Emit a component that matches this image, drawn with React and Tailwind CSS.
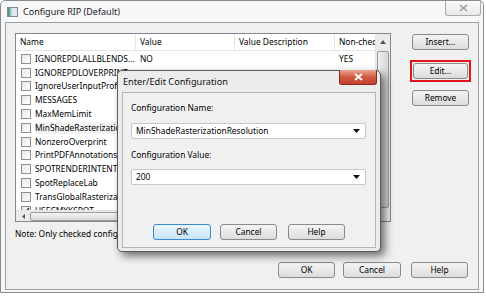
import React from "react";

const rows = [
  { name: "IGNOREPDLALLBLENDS...", value: "NO", desc: "", non: "YES" },
  { name: "IGNOREPDLOVERPRINT" },
  { name: "IgnoreUserInputProfile" },
  { name: "MESSAGES" },
  { name: "MaxMemLimit" },
  { name: "MinShadeRasterizationResolution", selected: true },
  { name: "NonzeroOverprint" },
  { name: "PrintPDFAnnotations" },
  { name: "SPOTRENDERINTENT" },
  { name: "SpotReplaceLab" },
  { name: "TransGlobalRasterization" },
  { name: "USECMYKSPOT", checked: true },
];

function Btn({ children, className = "", primary = false }) {
  return (
    <div
      className={
        "flex items-center justify-center h-[16px] rounded-[3px] border text-[8.4px] leading-none text-black " +
        (primary
          ? "border-[#3c8ad2] bg-gradient-to-b from-[#eaf6fd] to-[#c8e4f6] "
          : "border-[#8a8a8a] bg-gradient-to-b from-[#f5f5f5] to-[#dcdcdc] ") +
        className
      }
    >
      {children}
    </div>
  );
}

function Check({ checked }) {
  return (
    <div className="w-[10px] h-[10px] border border-[#8e8f8f] bg-gradient-to-br from-[#e6e6e6] to-white flex items-center justify-center shrink-0">
      {checked && (
        <svg width="8" height="8" viewBox="0 0 8 8">
          <path d="M1 4 L3 6 L7 1" stroke="#333" strokeWidth="1.4" fill="none" />
        </svg>
      )}
    </div>
  );
}

function Combo({ text }) {
  return (
    <div className="flex items-center h-[16px] bg-white border border-[#c7c7c7] rounded-[2px] pl-[4px] pr-[5px]">
      <span className="flex-1">{text}</span>
      <svg width="7" height="4" viewBox="0 0 7 4">
        <path d="M0 0 H7 L3.5 4 Z" fill="#111" />
      </svg>
    </div>
  );
}

export default function App() {
  return (
    <div className="relative w-[486px] h-[298px] bg-white overflow-hidden font-['Noto_Sans',sans-serif] text-[8.4px] leading-[12px] text-black">
      {/* outer window */}
      <div className="w-[484px] h-[293px] bg-[#f6f7f9] border border-[#8b8b8b] rounded-t-[5px] flex flex-col">
        <div className="h-[21px] flex items-center pl-[6px] relative">
          <div className="w-[11px] h-[10px] border border-[#7a8a9a] bg-gradient-to-r from-[#3a8f6a] via-[#dfe9f2] to-[#dfe9f2] mr-[5px]" />
          <span className="text-[9px] text-[#222]">Configure RIP (Default)</span>
          <div className="absolute right-[2px] top-[0px] w-[36px] h-[15px] border border-[#a9a9a9] border-t-0 rounded-b-[3px] bg-gradient-to-b from-[#fafafa] to-[#e9e9e9] flex items-center justify-center">
            <svg width="9" height="8" viewBox="0 0 9 8">
              <path d="M1 1 L8 7 M8 1 L1 7" stroke="#9a9a9a" strokeWidth="1.6" />
            </svg>
          </div>
        </div>
        <div className="mx-[4px] mb-[2px] flex-1 border border-[#a0a0a0] bg-[#f0f0f0] flex flex-col px-[9px] pt-[10px]">
          <div className="flex">
            {/* list view */}
            <div className="w-[376px] h-[189px] border border-[#828790] bg-white flex flex-col">
              <div className="flex flex-1 min-h-0">
                <div className="flex-1 flex flex-col min-w-0 overflow-hidden">
                  <div className="flex h-[17px] items-center border-b border-[#e5e5e5] shrink-0">
                    <div className="w-[120px] pl-[4px] border-r border-[#e5e5e5] h-full flex items-center">Name</div>
                    <div className="w-[99px] pl-[4px] border-r border-[#e5e5e5] h-full flex items-center">Value</div>
                    <div className="w-[100px] pl-[4px] border-r border-[#e5e5e5] h-full flex items-center">Value Description</div>
                    <div className="flex-1 pl-[4px] h-full flex items-center whitespace-nowrap overflow-hidden">Non-checked</div>
                  </div>
                  <div className="pt-[1px] overflow-hidden flex-1">
                    {rows.map((r) => (
                      <div key={r.name} className="flex items-center h-[13.8px]">
                        <div className="w-[120px] flex items-center pl-[5px] gap-[4px] overflow-hidden">
                          <Check checked={r.checked} />
                          <span className={"whitespace-nowrap overflow-hidden pr-[1px] " + (r.selected ? "bg-[#f2f2f2]" : "")}>{r.name}</span>
                        </div>
                        <div className="w-[99px] pl-[4px]">{r.value}</div>
                        <div className="w-[100px] pl-[4px]">{r.desc}</div>
                        <div className="flex-1 pl-[4px]">{r.non}</div>
                      </div>
                    ))}
                  </div>
                </div>
                {/* vertical scrollbar */}
                <div className="w-[15px] bg-[#ebebeb] border-l border-[#e3e3e3] flex flex-col items-center">
                  <div className="h-[15px] flex items-center justify-center">
                    <svg width="6" height="4" viewBox="0 0 6 4">
                      <path d="M0 4 L3 0 L6 4 Z" fill="#555" />
                    </svg>
                  </div>
                  <div className="w-[12px] flex-1 mt-[2px] mb-[2px] rounded-[2px] border border-[#9a9a9a] bg-gradient-to-r from-[#f0f0f0] to-[#d6d6d6]" />
                </div>
              </div>
              {/* horizontal scrollbar */}
              <div className="h-[11px] bg-[#ebebeb] flex items-center border-t border-[#e3e3e3]">
                <div className="w-[14px] flex items-center justify-center">
                  <svg width="3" height="5" viewBox="0 0 3 5">
                    <path d="M3 0 L0 2.5 L3 5 Z" fill="#555" />
                  </svg>
                </div>
                <div className="w-[150px] h-[9px] rounded-[2px] border border-[#9a9a9a] bg-gradient-to-b from-[#f4f4f4] to-[#dadada]" />
              </div>
            </div>
            {/* side buttons */}
            <div className="ml-[19px] w-[61px] flex flex-col items-center">
              <Btn className="w-[57px] mt-[1px]">Insert...</Btn>
              <div className="mt-[10px] border-2 border-[#e3141e] p-[1px]">
                <Btn className="w-[55px]">Edit...</Btn>
              </div>
              <Btn className="w-[57px] mt-[8px]">Remove</Btn>
            </div>
          </div>
          <div className="mt-[6px]">Note: Only checked configurations will be used.</div>
          <div className="flex justify-end gap-[8px] mt-[22px] pr-[1px]">
            <Btn className="w-[57px]">OK</Btn>
            <Btn className="w-[58px]">Cancel</Btn>
            <Btn className="w-[57px] ml-[2px]">Help</Btn>
          </div>
        </div>
      </div>

      {/* Enter/Edit Configuration dialog */}
      <div className="absolute left-[117px] top-[70px] w-[264px] h-[182px] rounded-[5px] border border-[#5a5a5a] bg-[#ececec] shadow-[4px_4px_9px_rgba(0,0,0,0.55)] flex flex-col">
        <div className="h-[21px] flex items-center pl-[5px] relative">
          <span className="text-[9.2px] text-[#111]">Enter/Edit Configuration</span>
          <div className="absolute right-[3px] top-[-1px] w-[38px] h-[15px] rounded-b-[3px] border border-[#8b2a1c] border-t-0 bg-gradient-to-b from-[#e7a592] via-[#d25a42] to-[#c2412a] flex items-center justify-center">
            <svg width="9" height="8" viewBox="0 0 9 8">
              <path d="M1 1 L8 7 M8 1 L1 7" stroke="#fff" strokeWidth="1.8" />
            </svg>
          </div>
        </div>
        <div className="mx-[4px] mb-[3px] flex-1 border border-[#b5b5b5] bg-[#f0f0f0] px-[8px] pt-[8px] flex flex-col">
          <div className="leading-[14px]">Configuration Name:</div>
          <div className="mt-[8px] mr-[1px]">
            <Combo text="MinShadeRasterizationResolution" />
          </div>
          <div className="mt-[9px] leading-[14px]">Configuration Value:</div>
          <div className="mt-[7px] mr-[1px]">
            <Combo text="200" />
          </div>
          <div className="flex mt-[39px] pl-[22px] gap-[9px]">
            <Btn primary className="w-[58px]">OK</Btn>
            <Btn className="w-[57px]">Cancel</Btn>
            <Btn className="w-[57px] ml-[2px]">Help</Btn>
          </div>
        </div>
      </div>
    </div>
  );
}
